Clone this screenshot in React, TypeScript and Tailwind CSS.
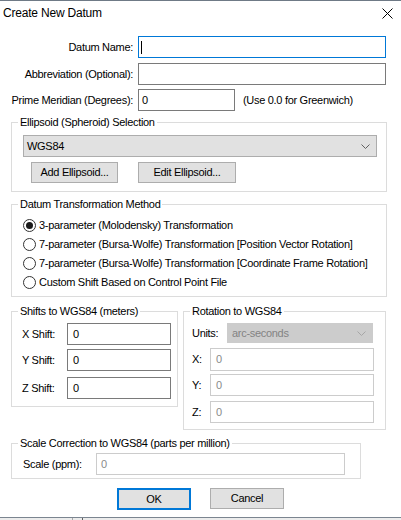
import React from "react";

const Chevron = ({ color }: { color: string }) => (
  <svg width="9" height="5" viewBox="0 0 9 5" fill="none">
    <polyline points="0.5,0.5 4.5,4.5 8.5,0.5" stroke={color} strokeWidth="1" />
  </svg>
);

const Radio = ({ checked, label }: { checked?: boolean; label: string }) => (
  <div className="h-[19px] flex items-center ml-[11px]">
    <div className="w-[13px] h-[13px] rounded-full border border-[#333333] bg-white flex items-center justify-center">
      {checked && <div className="w-[7px] h-[7px] rounded-full bg-[#1a1a1a]" />}
    </div>
    <span className="ml-[3px] whitespace-nowrap">{label}</span>
  </div>
);

const Button = ({ label, width, primary }: { label: string; width: string; primary?: boolean }) => (
  <div
    className={
      primary
        ? `${width} h-[22px] border-2 border-[#0078d7] bg-[#e1e1e1] flex items-center justify-center`
        : `${width} h-[21px] border border-[#adadad] bg-[#e1e1e1] flex items-center justify-center`
    }
  >
    {label}
  </div>
);

const Legend = ({ children }: { children: React.ReactNode }) => (
  <legend className="ml-[6px] px-[2px] leading-[13px] whitespace-nowrap">{children}</legend>
);

const App: React.FC = () => {
  return (
    <div className="w-[401px] h-[520px] bg-white flex flex-col border-t border-[#6f7a86] text-[11px] leading-[13px] tracking-[-0.3px] text-black font-['Liberation_Sans',Arial,sans-serif] overflow-hidden select-none">
      {/* title bar */}
      <div className="h-[25px] flex items-center justify-between pl-[3px] pr-[8px]">
        <span className="text-[12px] tracking-[-0.2px]">Create New Datum</span>
        <svg width="11" height="11" viewBox="0 0 11 11">
          <path d="M0.5 0.5 L10.5 10.5 M10.5 0.5 L0.5 10.5" stroke="#000" strokeWidth="1" />
        </svg>
      </div>

      {/* name rows */}
      <div className="mt-[10px] flex items-center">
        <span className="w-[133px] text-right">Datum Name:</span>
        <div className="ml-[5px] w-[248px] h-[22px] border border-[#0078d7] flex items-center pl-[2px]">
          <div className="w-px h-[13px] bg-black" />
        </div>
      </div>
      <div className="mt-[5px] flex items-center">
        <span className="w-[133px] text-right">Abbreviation (Optional):</span>
        <div className="ml-[5px] w-[248px] h-[22px] border border-[#7a7a7a]" />
      </div>
      <div className="mt-[4px] flex items-center">
        <span className="w-[133px] text-right">Prime Meridian (Degrees):</span>
        <div className="ml-[5px] w-[97px] h-[22px] border border-[#7a7a7a] flex items-center pl-[3px]">0</div>
        <span className="ml-[8px]">(Use 0.0 for Greenwich)</span>
      </div>

      {/* ellipsoid */}
      <fieldset className="mt-[5px] ml-[11px] w-[376px] border border-[#dcdcdc] pt-[6px] pb-[8px]">
        <Legend>Ellipsoid (Spheroid) Selection</Legend>
        <div className="ml-[11px] w-[354px] h-[22px] bg-[#e1e1e1] border border-[#adadad] flex items-center justify-between pl-[3px] pr-[6px]">
          <span>WGS84</span>
          <Chevron color="#606060" />
        </div>
        <div className="mt-[5px] ml-[19px] flex gap-[20px]">
          <Button label="Add Ellipsoid..." width="w-[87px]" />
          <Button label="Edit Ellipsoid..." width="w-[98px]" />
        </div>
      </fieldset>

      {/* transformation method */}
      <fieldset className="mt-[6px] ml-[11px] w-[376px] border border-[#dcdcdc] pt-[5px] pb-[4px]">
        <Legend>Datum Transformation Method</Legend>
        <Radio checked label="3-parameter (Molodensky) Transformation" />
        <Radio label="7-parameter (Bursa-Wolfe) Transformation [Position Vector Rotation]" />
        <Radio label="7-parameter (Bursa-Wolfe) Transformation [Coordinate Frame Rotation]" />
        <Radio label="Custom Shift Based on Control Point File" />
      </fieldset>

      {/* shifts + rotation */}
      <div className="mt-[8px] ml-[11px] flex items-start">
        <fieldset className="w-[167px] border border-[#dcdcdc] pt-[5px] pb-[7px]">
          <Legend>Shifts to WGS84 (meters)</Legend>
          {[
            { l: "X Shift:", m: "" },
            { l: "Y Shift:", m: "mt-[4px]" },
            { l: "Z Shift:", m: "mt-[6px]" },
          ].map((r) => (
            <div key={r.l} className={`${r.m} flex items-center`}>
              <span className="ml-[10px] w-[45px]">{r.l}</span>
              <div className="w-[104px] h-[22px] border border-[#7a7a7a] flex items-center pl-[5px]">0</div>
            </div>
          ))}
        </fieldset>

        <fieldset className="ml-[5px] w-[203px] border border-[#dcdcdc] pt-[5px] pb-[6px]">
          <Legend>Rotation to WGS84</Legend>
          <div className="flex items-center">
            <span className="ml-[8px] w-[35px]">Units:</span>
            <div className="w-[146px] h-[20px] bg-[#cccccc] border border-[#cccccc] flex items-center justify-between pl-[4px] pr-[6px] text-[#838383]">
              <span>arc-seconds</span>
              <Chevron color="#a6a6a6" />
            </div>
          </div>
          {[
            { l: "X:", m: "mt-[5px]", h: "h-[23px]" },
            { l: "Y:", m: "mt-[3px]", h: "h-[22px]" },
            { l: "Z:", m: "mt-[5px]", h: "h-[22px]" },
          ].map((r) => (
            <div key={r.l} className={`${r.m} flex items-center`}>
              <span className="ml-[8px] w-[18px]">{r.l}</span>
              <div className={`${r.h} w-[164px] border border-[#cccccc] flex items-center pl-[5px] text-[#8a8a8a]`}>0</div>
            </div>
          ))}
        </fieldset>
      </div>

      {/* scale */}
      <fieldset className="mt-[7px] ml-[11px] w-[350px] border border-[#dcdcdc] pt-[3px] pb-[3px]">
        <Legend>Scale Correction to WGS84 (parts per million)</Legend>
        <div className="flex items-center">
          <span className="ml-[11px] w-[73px]">Scale (ppm):</span>
          <div className="w-[249px] h-[22px] border border-[#cccccc] flex items-center pl-[4px] text-[#8a8a8a]">0</div>
        </div>
      </fieldset>

      {/* dialog buttons */}
      <div className="mt-[9px] ml-[117px] flex gap-[19px]">
        <Button label="OK" width="w-[74px]" primary />
        <Button label="Cancel" width="w-[74px]" />
      </div>

      {/* bottom edge */}
      <div className="mt-auto h-[3px] border-t border-[#7b8590] bg-[#ececec] flex">
        <div className="ml-[72px] w-px bg-[#a8a8a8]" />
        <div className="ml-[9px] w-px bg-[#606060]" />
      </div>
    </div>
  );
};

export default App;
